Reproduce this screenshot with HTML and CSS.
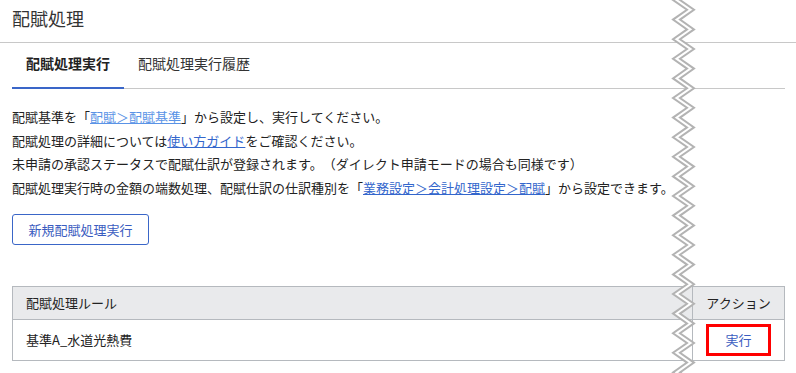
FILE: index.html
```html
<!DOCTYPE html>
<html lang="ja">
<head>
<meta charset="utf-8">
<title>配賦処理</title>
<link rel="stylesheet" href="styles.css">
</head>
<body>
<div class="page">
  <header class="page-title">配賦処理</header>
  <nav class="tabs">
    <div class="tab tab-active">配賦処理実行</div>
    <div class="tab">配賦処理実行履歴</div>
  </nav>
  <main class="content">
    <div class="desc">
      <p>配賦基準を「<a class="link link-light" href="#">配賦＞配賦基準</a>」から設定し、実行してください。</p>
      <p>配賦処理の詳細については<a class="link" href="#">使い方ガイド</a>をご確認ください。</p>
      <p>未申請の承認ステータスで配賦仕訳が登録されます。（ダイレクト申請モードの場合も同様です）</p>
      <p>配賦処理実行時の金額の端数処理、配賦仕訳の仕訳種別を「<a class="link" href="#">業務設定＞会計処理設定＞配賦</a>」から設定できます。</p>
    </div>
    <button class="btn-outline" type="button">新規配賦処理実行</button>
    <table class="rules">
      <thead>
        <tr><th class="col-rule">配賦処理ルール</th><th class="col-action">アクション</th></tr>
      </thead>
      <tbody>
        <tr><td class="col-rule">基準A_水道光熱費</td><td class="col-action"><span class="highlight"><a class="run" href="#">実行</a></span></td></tr>
      </tbody>
    </table>
  </main>
  <svg class="tear" width="30" height="373" viewBox="0 0 30 373" xmlns="http://www.w3.org/2000/svg">
    <polygon id="tearfill" fill="#ffffff" points=""/>
    <polyline id="tearL" fill="none" stroke="#b3b3b3" stroke-width="2" points=""/>
    <polyline id="tearR" fill="none" stroke="#b3b3b3" stroke-width="2" points=""/>
  </svg>
</div>
<script src="tear.js"></script>
</body>
</html>
```

FILE: tear.js
```js
(function () {
  var P = 19.6, H = 373, amp = 14, off = 7, x0 = 3;
  var left = [], right = [];
  for (var i = -1; i * (P / 2) <= H + P; i++) {
    var y = i * (P / 2);
    var x = (i % 2 === 0) ? x0 : x0 + amp;
    left.push([x, y]);
    right.push([x + off, y]);
  }
  function str(a) { return a.map(function (p) { return p[0] + ',' + p[1].toFixed(2); }).join(' '); }
  document.getElementById('tearL').setAttribute('points', str(left));
  document.getElementById('tearR').setAttribute('points', str(right));
  document.getElementById('tearfill').setAttribute('points', str(left.concat(right.slice().reverse())));
})();
```

FILE: styles.css
```css
* { box-sizing: border-box; }
html, body { margin: 0; padding: 0; background: #fff; }
body {
  font-family: "Noto Sans CJK JP", "Noto Sans", sans-serif;
  color: #333;
  width: 796px;
  height: 373px;
  overflow: hidden;
  text-spacing-trim: space-all;
}
.page { position: relative; width: 796px; height: 373px; }
.page-title {
  height: 43px;
  padding: 6px 12px 0;
  font-size: 18px;
  line-height: 24px;
  border-bottom: 1px solid #c8c8c8;
  color: #333;
}
.tabs {
  display: flex;
  margin: 0 11px 0 12px;
  border-bottom: 1px solid #c8c8c8;
}
.tab {
  padding: 10px 14px 14px;
  font-size: 14px;
  line-height: 20px;
  border-bottom: 2px solid transparent;
  margin-bottom: -1px;
  color: #333;
}
.tab-active {
  font-weight: bold;
  border-bottom-color: #3a66c8;
  color: #222;
}
.content { padding: 0 11px 0 12px; }
.desc { padding-top: 16px; font-size: 13px; line-height: 23.7px; color: #222; }
.desc p { margin: 0; white-space: nowrap; }
.link { color: #3366cc; text-decoration: underline; }
.link-light { color: #5a93e6; }
.btn-outline {
  display: block;
  margin-top: 14px;
  height: 31px;
  width: 137px;
  padding: 0;
  border: 1px solid #3a66c8;
  border-radius: 3px;
  background: #fff;
  color: #3a5cc0;
  font-family: inherit;
  font-size: 13px;
  line-height: 29px;
}
.rules {
  margin-top: 41px;
  width: 773px;
  border-collapse: collapse;
  font-size: 13px;
  color: #222;
}
.rules th, .rules td {
  border: 1px solid #b5b9be;
  padding: 0 0 0 13px;
  text-align: left;
  font-weight: normal;
}
.rules th { background: #e9eaec; height: 33px; }
.rules td { height: 41px; }
.rules .col-action { width: 92px; padding: 0; text-align: center; }
.highlight {
  display: inline-flex;
  align-items: center;
  justify-content: center;
  width: 65px;
  height: 32px;
  border: 3px solid #ff0000;
  vertical-align: middle;
}
.run { color: #3a5cc0; text-decoration: none; }
.tear { position: absolute; left: 670px; top: 0; }
```
